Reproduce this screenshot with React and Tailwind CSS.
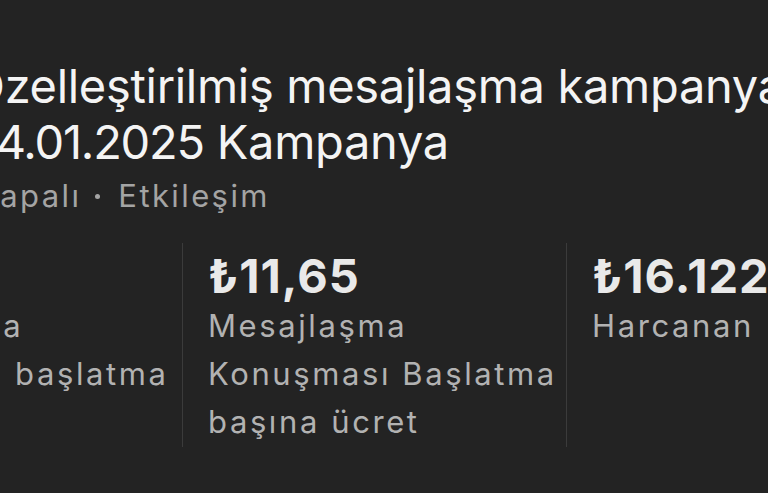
export default function App() {
  const font = { fontFamily: '"Inter", "Noto Sans", sans-serif' };
  const cols = [
    { v: '₺1.384', l: ['Mesajlaşma', 'konuşması başlatma'] },
    { v: '₺11,65', l: ['Mesajlaşma', 'Konuşması Başlatma', 'başına ücret'] },
    { v: '₺16.122,72', l: ['Harcanan'] },
  ];
  return (
    <div className="w-[768px] h-[493px] overflow-hidden bg-[#232323]" style={font}>
      <div className="ml-[-31px] pt-[58px] whitespace-nowrap text-[47px] leading-[56px] tracking-[-0.3px] text-[#f4f4f4]">
        <div>Özelleştirilmiş mesajlaşma kampanyası</div>
        <div><span className="tracking-[-1.2px]">24.01.2025</span> Kampanya</div>
      </div>
      <div className="ml-[-23px] mt-[6px] flex items-center whitespace-nowrap text-[31px] leading-[40px] tracking-[2.4px] text-[#a4a4a4]">
        <span>Kapalı</span>
        <span className="ml-[14px] mr-[18px] h-[5px] w-[5px] rounded-full bg-[#a4a4a4]" />
        <span>Etkileşim</span>
      </div>
      <div className="ml-[-202px] mt-[27px] flex whitespace-nowrap">
        {cols.map((c, i) => (
          <div key={i} className="w-[384px] shrink-0 border-l border-[#3b3b3b] pl-[25px] pt-[6px] pb-[1px]">
            <div className="text-[47px] leading-[53px] font-bold tracking-[1px] text-[#e9e9e9]">{c.v}</div>
            {c.l.map((t, j) => (
              <div key={j} className="text-[31px] leading-[48px] tracking-[2.6px] text-[#b2b2b2]">{t}</div>
            ))}
          </div>
        ))}
      </div>
    </div>
  );
}
